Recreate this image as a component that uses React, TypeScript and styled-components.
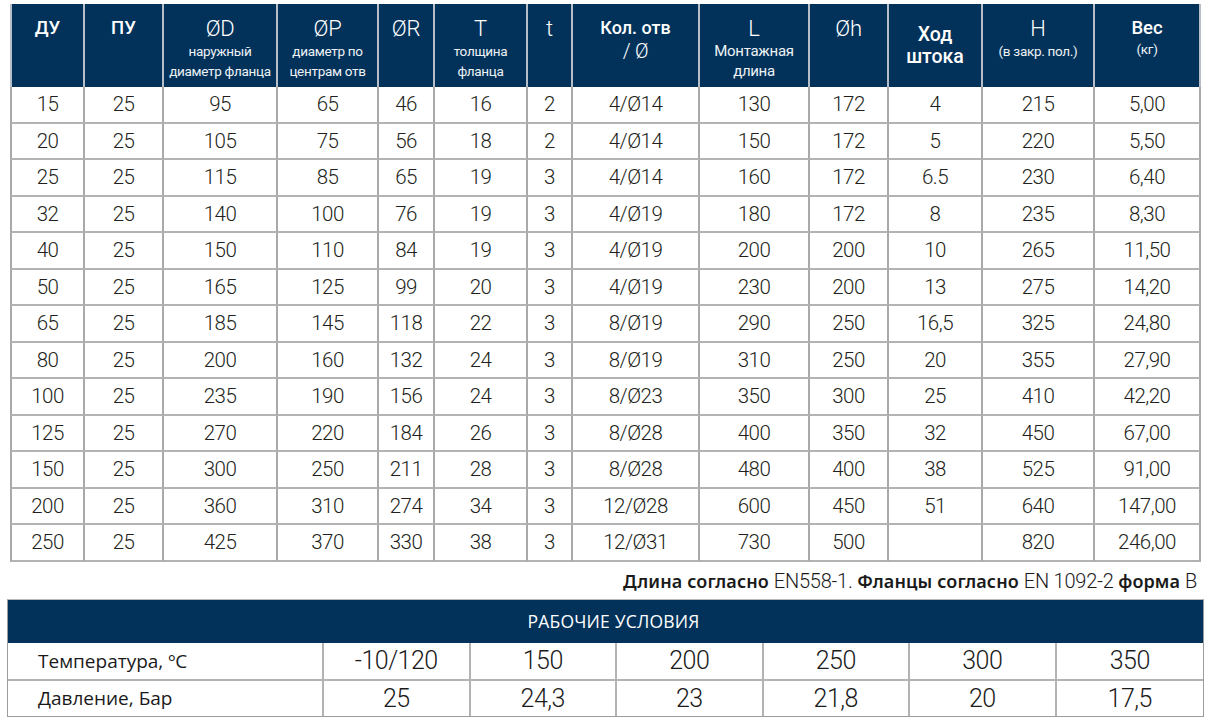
import React from "react";
import styled, { createGlobalStyle } from "styled-components";

const Global = createGlobalStyle`
  html, body { margin: 0; padding: 0; background: #ffffff; }
  body { font-family: Roboto, "Liberation Sans", sans-serif; color: #231f20; }
  * { box-sizing: border-box; }
`;

const NAVY = "#02325a";
const LINE = "#a9a9a9";

const Page = styled.div`
  width: 1210px;
  height: 718px;
  padding-top: 4px;
  display: flex;
  flex-direction: column;
  overflow: hidden;
`;

const Table = styled.div`
  margin-left: 10px;
  width: 1191px;
  display: flex;
  flex-direction: column;
`;

const COLS = "75px 79px 114px 101px 56px 93px 45px 127px 110px 79px 94px 112px 106px";

const HeadRow = styled.div`
  display: grid;
  grid-template-columns: ${COLS};
  height: 83px;
  background: ${NAVY};
`;

const HeadCell = styled.div<{ $top?: number }>`
  display: flex;
  flex-direction: column;
  align-items: center;
  padding-top: ${(p) => p.$top ?? 13}px;
  color: #ffffff;
  text-align: center;
  border-right: 2px solid #b7bec7;
  &:first-child { border-left: 2px solid #b7bec7; }
`;

const MainLabel = styled.div<{ $size?: number }>`
  font-family: Roboto, sans-serif;
  font-weight: 300;
  font-size: ${(p) => p.$size ?? 22}px;
  line-height: 24px;
  letter-spacing: -0.3px;
`;

const BoldLabel = styled.div<{ $size?: number }>`
  font-family: Roboto, sans-serif;
  font-weight: 500;
  font-size: ${(p) => p.$size ?? 18.5}px;
  line-height: 22px;
`;

const SubLabel = styled.div<{ $size?: number }>`
  font-family: Roboto, sans-serif;
  font-weight: 400;
  font-size: ${(p) => p.$size ?? 13.5}px;
  line-height: 20px;
  color: #eef2f6;
  white-space: nowrap;
  letter-spacing: -0.3px;
`;

const Row = styled.div`
  display: grid;
  grid-template-columns: ${COLS};
  height: 36.5px;
`;

const Cell = styled.div`
  display: flex;
  align-items: center;
  justify-content: center;
  font-family: Roboto, sans-serif;
  font-weight: 300;
  font-size: 20.5px;
  letter-spacing: -0.5px;
  color: #231f20;
  border-right: 2px solid ${LINE};
  border-bottom: 2px solid #b3b3b3;
  &:first-child { border-left: 2px solid ${LINE}; }
`;

const Note = styled.div`
  height: 37px;
  display: flex;
  align-items: center;
  justify-content: flex-end;
  padding-right: 13px;
  padding-top: 2px;
  color: #1a1a1a;
  white-space: pre;
`;

const NoteBold = styled.span`
  font-family: "Noto Sans", "Open Sans", sans-serif;
  font-weight: 600;
  font-size: 18px;
  letter-spacing: 0.1px;
`;

const NoteLight = styled.span`
  font-family: Roboto, sans-serif;
  font-weight: 300;
  font-size: 20px;
  letter-spacing: -0.2px;
`;

const Cond = styled.div`
  margin-left: 7px;
  width: 1197px;
  border: 1px solid #9c9c9c;
  border-top-color: #b9b9b9;
  display: flex;
  flex-direction: column;
`;

const CondHead = styled.div`
  height: 43px;
  background: ${NAVY};
  color: #ffffff;
  display: flex;
  align-items: center;
  justify-content: center;
  padding-left: 16px;
  font-family: "Open Sans", sans-serif;
  font-size: 17.5px;
  letter-spacing: 0.2px;
`;

const CondRow = styled.div<{ $h: number; $last?: boolean }>`
  display: grid;
  grid-template-columns: 316px repeat(6, 1fr);
  height: ${(p) => p.$h}px;
  border-bottom: ${(p) => (p.$last ? "none" : "2px solid #b3b3b3")};
`;

const CondLabel = styled.div`
  display: flex;
  align-items: center;
  padding-left: 30px;
  font-family: "Open Sans", sans-serif;
  font-size: 19px;
  color: #1a1a1a;
  border-right: 2px solid #b3b3b3;
`;

const CondValue = styled.div`
  display: flex;
  align-items: center;
  justify-content: center;
  font-family: Roboto, sans-serif;
  font-weight: 300;
  font-size: 25px;
  letter-spacing: -0.5px;
  color: #1a1a1a;
  border-right: 2px solid #b3b3b3;
  &:last-child { border-right: none; }
`;

const rows: string[][] = [
  ["15", "25", "95", "65", "46", "16", "2", "4/Ø14", "130", "172", "4", "215", "5,00"],
  ["20", "25", "105", "75", "56", "18", "2", "4/Ø14", "150", "172", "5", "220", "5,50"],
  ["25", "25", "115", "85", "65", "19", "3", "4/Ø14", "160", "172", "6.5", "230", "6,40"],
  ["32", "25", "140", "100", "76", "19", "3", "4/Ø19", "180", "172", "8", "235", "8,30"],
  ["40", "25", "150", "110", "84", "19", "3", "4/Ø19", "200", "200", "10", "265", "11,50"],
  ["50", "25", "165", "125", "99", "20", "3", "4/Ø19", "230", "200", "13", "275", "14,20"],
  ["65", "25", "185", "145", "118", "22", "3", "8/Ø19", "290", "250", "16,5", "325", "24,80"],
  ["80", "25", "200", "160", "132", "24", "3", "8/Ø19", "310", "250", "20", "355", "27,90"],
  ["100", "25", "235", "190", "156", "24", "3", "8/Ø23", "350", "300", "25", "410", "42,20"],
  ["125", "25", "270", "220", "184", "26", "3", "8/Ø28", "400", "350", "32", "450", "67,00"],
  ["150", "25", "300", "250", "211", "28", "3", "8/Ø28", "480", "400", "38", "525", "91,00"],
  ["200", "25", "360", "310", "274", "34", "3", "12/Ø28", "600", "450", "51", "640", "147,00"],
  ["250", "25", "425", "370", "330", "38", "3", "12/Ø31", "730", "500", "", "820", "246,00"],
];

const temps = ["-10/120", "150", "200", "250", "300", "350"];
const press = ["25", "24,3", "23", "21,8", "20", "17,5"];

export default function App() {
  return (
    <Page>
      <Global />
      <Table>
        <HeadRow>
          <HeadCell><BoldLabel>ДУ</BoldLabel></HeadCell>
          <HeadCell><BoldLabel>ПУ</BoldLabel></HeadCell>
          <HeadCell>
            <MainLabel>ØD</MainLabel>
            <SubLabel>наружный</SubLabel>
            <SubLabel>диаметр фланца</SubLabel>
          </HeadCell>
          <HeadCell>
            <MainLabel>ØP</MainLabel>
            <SubLabel>диаметр по</SubLabel>
            <SubLabel>центрам отв</SubLabel>
          </HeadCell>
          <HeadCell><MainLabel>ØR</MainLabel></HeadCell>
          <HeadCell>
            <MainLabel>T</MainLabel>
            <SubLabel>толщина</SubLabel>
            <SubLabel>фланца</SubLabel>
          </HeadCell>
          <HeadCell><MainLabel>t</MainLabel></HeadCell>
          <HeadCell>
            <BoldLabel $size={18}>Кол. отв</BoldLabel>
            <MainLabel $size={20}>/ Ø</MainLabel>
          </HeadCell>
          <HeadCell>
            <MainLabel>L</MainLabel>
            <SubLabel $size={15}>Монтажная</SubLabel>
            <SubLabel $size={15}>длина</SubLabel>
          </HeadCell>
          <HeadCell><MainLabel>Øh</MainLabel></HeadCell>
          <HeadCell $top={20}>
            <BoldLabel $size={19.5}>Ход</BoldLabel>
            <BoldLabel $size={19.5}>штока</BoldLabel>
          </HeadCell>
          <HeadCell>
            <MainLabel>H</MainLabel>
            <SubLabel>(в закр. пол.)</SubLabel>
          </HeadCell>
          <HeadCell>
            <BoldLabel>Вес</BoldLabel>
            <SubLabel>(кг)</SubLabel>
          </HeadCell>
        </HeadRow>
        {rows.map((r, i) => (
          <Row key={i}>
            {r.map((v, j) => (
              <Cell key={j}>{v}</Cell>
            ))}
          </Row>
        ))}
      </Table>
      <Note>
        <NoteBold>Длина согласно </NoteBold>
        <NoteLight>EN558-1. </NoteLight>
        <NoteBold>Фланцы согласно </NoteBold>
        <NoteLight>EN 1092-2 </NoteLight>
        <NoteBold>форма </NoteBold>
        <NoteLight>B</NoteLight>
      </Note>
      <Cond>
        <CondHead>РАБОЧИЕ УСЛОВИЯ</CondHead>
        <CondRow $h={38}>
          <CondLabel>Температура, ºC</CondLabel>
          {temps.map((t) => (
            <CondValue key={t}>{t}</CondValue>
          ))}
        </CondRow>
        <CondRow $h={35} $last>
          <CondLabel>Давление, Бар</CondLabel>
          {press.map((t) => (
            <CondValue key={t}>{t}</CondValue>
          ))}
        </CondRow>
      </Cond>
    </Page>
  );
}
